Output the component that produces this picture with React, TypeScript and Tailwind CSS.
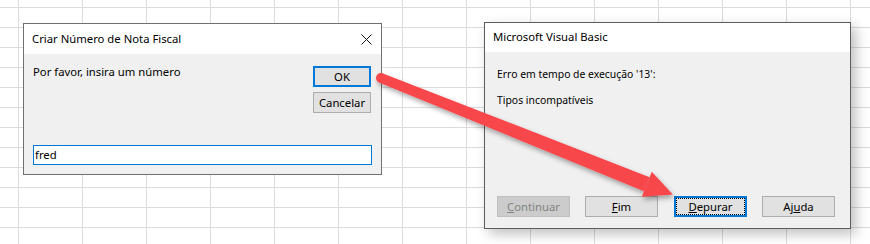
import React from "react";

const font = "font-['Noto_Sans','Open_Sans',sans-serif]";

function WinButton({
  children,
  className = "",
}: {
  children: React.ReactNode;
  className?: string;
}) {
  return (
    <div
      className={
        "flex h-[21px] items-center justify-center border text-[11.3px] leading-none " +
        className
      }
    >
      {children}
    </div>
  );
}

function InputDialog() {
  return (
    <div className="mt-[1px] flex h-[152px] w-[359px] flex-col border border-[#707070] bg-[#f0f0f0]">
      {/* Title bar */}
      <div className="flex h-[30px] items-center justify-between bg-white pl-[8px] pr-[9px] text-[11.3px] text-black">
        <span>Criar Número de Nota Fiscal</span>
        <svg width="11" height="11" viewBox="0 0 11 11">
          <path d="M0.5 0.5 L10.5 10.5 M10.5 0.5 L0.5 10.5" stroke="#111" strokeWidth="1" />
        </svg>
      </div>
      {/* Body */}
      <div className="flex flex-1 flex-col pl-[9px] pr-[10px] pb-[9px] pt-[10px]">
        <div className="flex justify-between">
          <p className="text-[11.3px] leading-[16px] text-black">Por favor, insira um número</p>
          <div className="mt-[2px] flex flex-col gap-[5px]">
            <WinButton className="w-[58px] border-2 border-[#0078d7] bg-[#e1e1e1]">OK</WinButton>
            <WinButton className="w-[58px] border-[#adadad] bg-[#e1e1e1]">Cancelar</WinButton>
          </div>
        </div>
        <div className="mt-auto flex h-[20px] w-[339px] items-center border border-[#0078d7] bg-white pl-[1px] text-[11.3px] text-black">
          fred
        </div>
      </div>
    </div>
  );
}

function ErrorDialog() {
  return (
    <div className="ml-[102px] flex h-[207px] w-[367px] flex-col border border-[#5c5c5c] bg-[#f0f0f0] shadow-[5px_5px_12px_rgba(0,0,0,0.25)]">
      <div className="flex h-[29px] items-center bg-white pl-[8px] text-[11.3px] text-black">
        Microsoft Visual Basic
      </div>
      <div className="flex flex-1 flex-col pb-[11px] pl-[12px] pt-[14px] text-[10.4px] text-black">
        <p className="leading-[16px]">Erro em tempo de execução '13':</p>
        <p className="mt-[10px] leading-[16px]">Tipos incompatíveis</p>
        <div className="mt-auto flex gap-[15px]">
          <WinButton className="w-[73px] border-[#bfbfbf] bg-[#cccccc] text-[#838383]">
            <span>
              <span className="underline">C</span>ontinuar
            </span>
          </WinButton>
          <WinButton className="w-[73px] border-[#adadad] bg-[#e1e1e1]">
            <span>
              <span className="underline">F</span>im
            </span>
          </WinButton>
          <WinButton className="ml-[1px] w-[73px] border-2 border-[#0078d7] bg-[#e1e1e1] outline-1 outline-dotted outline-black -outline-offset-3">
            <span>
              <span className="underline">D</span>epurar
            </span>
          </WinButton>
          <WinButton className="w-[73px] border-[#adadad] bg-[#e1e1e1]">
            <span>
              Aj<span className="underline">u</span>da
            </span>
          </WinButton>
        </div>
      </div>
    </div>
  );
}

function Arrow() {
  return (
    <svg
      className="pointer-events-none absolute left-0 top-0"
      width="870"
      height="244"
      viewBox="0 0 870 244"
    >
      <defs>
        <filter id="arrowShadow" x="-10%" y="-10%" width="130%" height="140%">
          <feDropShadow dx="1.5" dy="3" stdDeviation="2.5" floodColor="#000" floodOpacity="0.35" />
        </filter>
      </defs>
      <g fill="#f7464b" filter="url(#arrowShadow)">
        <circle cx="381" cy="78" r="5" />
        <polygon points="379.1,82.6 382.9,73.4 649.6,177.2 644,191.2" />
        <polygon points="651.8,171.7 672.8,194.6 641.8,196.7" />
      </g>
    </svg>
  );
}

export default function App() {
  return (
    <div
      className={
        "relative h-[244px] w-[870px] overflow-hidden bg-white [background-image:linear-gradient(to_right,#dcdcdc_1px,transparent_1px),linear-gradient(to_bottom,#dcdcdc_1px,transparent_1px)] [background-size:64px_20px] [background-position:18px_7px] " +
        font
      }
    >
      <div className="flex items-start pl-[23px] pt-[22px]">
        <InputDialog />
        <ErrorDialog />
      </div>
      <Arrow />
    </div>
  );
}
